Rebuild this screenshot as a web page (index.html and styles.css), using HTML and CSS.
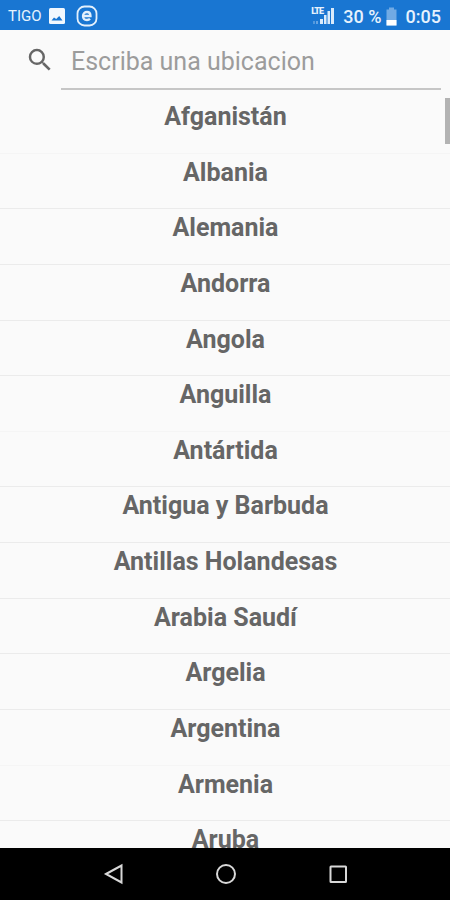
FILE: index.html
```html
<!DOCTYPE html>
<html lang="es">
<head>
  <meta charset="UTF-8">
  <title>Ubicacion</title>
  <link rel="stylesheet" href="styles.css">
</head>
<body>

<div class="status-bar">
  <span class="carrier">TIGO</span>
  <svg class="icon-photo" width="18" height="18" viewBox="0 0 18 18">
    <rect x="1" y="1" width="16" height="16" rx="1.5" fill="#f2f8fe"/>
    <path d="M3.5 13.5l2.500-3 2.200 1.500 3-3 3.300 4.500z" fill="#1976d2"/>
  </svg>
  <svg class="icon-app" width="22" height="22" viewBox="0 0 22 22" fill="none" stroke="#e3f0fc">
    <rect x="1.5" y="1.5" width="19" height="19" rx="7" stroke-width="1.8"/>
    <path d="M7.5 11h7c0-2.5-1.3-4-3.5-4s-4 1.6-4 4 1.7 4 4 4c1.3 0 2.300-.4 3-1.200" stroke-width="2.3"/>
  </svg>
  <div class="signal">
    <span class="lte">LTE</span>
    <svg width="24" height="20" viewBox="0 0 24 20" fill="#d9eafb">
      <rect x="2" y="15" width="2" height="3" opacity=".3"/>
      <rect x="5" y="15" width="2" height="3" opacity=".4"/>
      <rect x="9" y="13" width="3" height="5"/>
      <rect x="13" y="9" width="2.5" height="9"/>
      <rect x="16.5" y="5" width="2.5" height="13"/>
      <rect x="20" y="2" width="3" height="16"/>
    </svg>
  </div>
  <span class="percent">30 %</span>
  <svg class="battery" width="11" height="19" viewBox="0 0 11 19">
    <path d="M3 0.5h5v2h2.500v16h-10v-16h2.500z" fill="#71aae4"/>
    <path d="M0.5 13h10v5.500h-10z" fill="#fff"/>
  </svg>
  <span class="clock">0:05</span>
</div>

<div class="search">
  <svg class="search-icon" width="30" height="30" viewBox="0 0 24 24" fill="#666">
    <path d="M15.5 14h-.79l-.28-.27A6.47 6.47 0 0 0 16 9.500 6.500 6.500 0 1 0 9.500 16c1.610 0 3.090-.590 4.230-1.570l.270.280v.790l5 4.990L20.490 19l-4.990-5zm-6 0C7.010 14 5 11.990 5 9.500S7.010 5 9.500 5 14 7.010 14 9.500 11.990 14 9.500 14z"/>
  </svg>
  <input type="text" placeholder="Escriba una ubicacion">
</div>

<div class="list">
  <div class="scroll-thumb"></div>
  <div class="country faint">Afganistán</div>
  <div class="country">Albania</div>
  <div class="country">Alemania</div>
  <div class="country">Andorra</div>
  <div class="country">Angola</div>
  <div class="country faint">Anguilla</div>
  <div class="country">Antártida</div>
  <div class="country">Antigua y Barbuda</div>
  <div class="country">Antillas Holandesas</div>
  <div class="country">Arabia Saudí</div>
  <div class="country">Argelia</div>
  <div class="country faint">Argentina</div>
  <div class="country">Armenia</div>
  <div class="country">Aruba</div>
</div>

<div class="nav-bar">
  <svg width="24" height="24" viewBox="0 0 24 24"><path d="M4 12L19.500 3.500v17z"/></svg>
  <svg width="24" height="24" viewBox="0 0 24 24"><circle cx="12" cy="12" r="9"/></svg>
  <svg width="24" height="24" viewBox="0 0 24 24"><rect x="4.500" y="4.500" width="15.500" height="15.500" rx="0.500"/></svg>
</div>

</body>
</html>
```
FILE: styles.css
```css
* {
  box-sizing: border-box;
}

body {
  margin: 0;
  height: 900px;
  display: flex;
  flex-direction: column;
  font-family: Roboto, sans-serif;
  background-color: #fafafa;
  overflow: hidden;
}

/* barra de estado */
.status-bar {
  flex: none;
  height: 30px;
  display: flex;
  align-items: center;
  padding: 2px 9px 0 8px;
  background-color: #1976d2;
  color: #e6f2fd;
  font-size: 18px;
  font-weight: 500;
}

.carrier {
  width: 40px;
  font-size: 15px;
  font-weight: 400;
}

.icon-app {
  margin-left: 10px;
}

.signal {
  position: relative;
  height: 20px;
  margin-left: auto;
}

.lte {
  position: absolute;
  left: 0;
  top: 1px;
  font-size: 9px;
  line-height: 9px;
  font-weight: 900;
  letter-spacing: -1px;
}

.percent {
  margin-left: 8px;
  white-space: nowrap;
}

.battery {
  margin-left: 4px;
}

.clock {
  margin-left: 9px;
}

/* buscador */
.search {
  flex: none;
  height: 60px;
  display: flex;
  padding: 0 9px 0 25px;
}

.search-icon {
  margin: 15px 6px 0 0;
}

.search input {
  flex: 1;
  min-width: 0;
  padding: 4px 10px 0;
  border: none;
  border-bottom: 2px solid #c6c6c6;
  outline: none;
  background: none;
  font-family: Roboto, sans-serif;
  font-size: 25px;
  color: #666;
}

.search input::placeholder {
  color: #9c9c9c;
}

/* lista de paises */
.list {
  position: relative;
  flex: 1;
  min-height: 0;
  padding-top: 8px;
  overflow: hidden;
}

.country {
  height: 55.63px;
  padding: 4px 0 0 1px;
  border-bottom: 1px solid #ebebeb;
  text-align: center;
  font-size: 25px;
  line-height: 30px;
  font-weight: 700;
  color: #666;
}

.country.faint {
  border-bottom-color: #f5f5f5;
}

.scroll-thumb {
  position: absolute;
  right: 0;
  top: 8px;
  width: 5px;
  height: 46px;
  background-color: #b3b3b3;
}

/* botones de navegacion */
.nav-bar {
  flex: none;
  height: 52px;
  display: flex;
  justify-content: center;
  align-items: center;
  gap: 88px;
  padding-left: 1px;
  background-color: #000;
}

.nav-bar svg {
  fill: none;
  stroke: #d8d8d8;
  stroke-width: 2;
}
```
